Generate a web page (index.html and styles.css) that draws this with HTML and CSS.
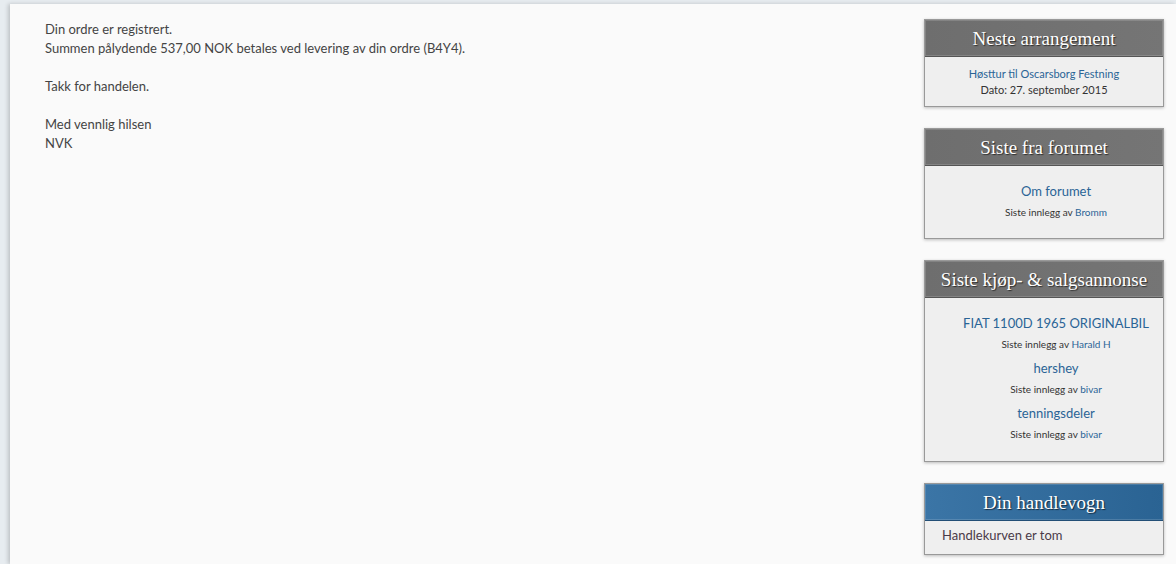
FILE: index.html
```html
<!DOCTYPE html>
<html lang="no">
<head>
<meta charset="utf-8">
<title>Ordre</title>
<link rel="stylesheet" href="styles.css">
</head>
<body>
<div class="wrap">
  <main class="content">
    <p>Din ordre er registrert.<br>Summen pålydende 537,00 NOK betales ved levering av din ordre (B4Y4).</p>
    <p>Takk for handelen.</p>
    <p>Med vennlig hilsen<br>NVK</p>
  </main>
  <aside class="sidebar">
    <section class="box">
      <h2 class="box-head">Neste arrangement</h2>
      <div class="box-body event">
        <a class="link" href="#">Høsttur til Oscarsborg Festning</a>
        <div class="date">Dato: 27. september 2015</div>
      </div>
    </section>
    <section class="box">
      <h2 class="box-head">Siste fra forumet</h2>
      <div class="box-body list">
        <div class="item">
          <a class="title" href="#">Om forumet</a>
          <div class="meta">Siste innlegg av <a href="#">Bromm</a></div>
        </div>
      </div>
    </section>
    <section class="box">
      <h2 class="box-head">Siste kjøp- &amp; salgsannonse</h2>
      <div class="box-body list list-long">
        <div class="item">
          <a class="title" href="#">FIAT 1100D 1965 ORIGINALBIL</a>
          <div class="meta">Siste innlegg av <a href="#">Harald H</a></div>
        </div>
        <div class="item">
          <a class="title" href="#">hershey</a>
          <div class="meta">Siste innlegg av <a href="#">bivar</a></div>
        </div>
        <div class="item">
          <a class="title" href="#">tenningsdeler</a>
          <div class="meta">Siste innlegg av <a href="#">bivar</a></div>
        </div>
      </div>
    </section>
    <section class="box">
      <h2 class="box-head blue">Din handlevogn</h2>
      <div class="box-body cart">Handlekurven er tom</div>
    </section>
  </aside>
</div>
</body>
</html>
```
FILE: styles.css
```css
html, body {
  margin: 0;
  padding: 0;
  background: #e7ecf0;
  height: 100%;
  overflow: hidden;
}
body {
  font-family: "Lato", "Open Sans", sans-serif;
  color: #444;
}
.wrap {
  display: flex;
  margin: 4px 0 0 10px;
  background: #fafafa;
  height: calc(100vh - 4px);
  box-sizing: border-box;
  box-shadow: -2px 0 4px rgba(0,0,0,0.18);
}
.content {
  flex: 1;
  padding: 16px 0 0 35px;
  font-size: 13px;
  line-height: 19px;
  color: #444;
}
.content p {
  margin: 0 0 19px;
}
.sidebar {
  width: 240px;
  margin-right: 12px;
  padding-top: 15px;
  display: flex;
  flex-direction: column;
  gap: 21px;
}
.box {
  background: #efefef;
  border: 1px solid #999;
  box-shadow: 0 1px 3px rgba(0,0,0,0.25);
}
.box-head {
  margin: 0;
  height: 36px;
  line-height: 37px;
  text-align: center;
  font-family: "Liberation Serif", "DejaVu Serif", serif;
  font-weight: normal;
  font-size: 19px;
  color: #fff;
  text-shadow: 1px 1px 1px rgba(0,0,0,0.6);
  background: linear-gradient(to right, #6e6e6e, #757575);
  border-bottom: 1px solid #555;
  box-shadow: inset 0 0 0 1px rgba(255,255,255,0.15);
}
.box-head.blue {
  background: linear-gradient(to right, #3b75a6, #2a6393);
  border-bottom-color: #234f76;
}
.box-body {
  font-size: 11px;
  text-align: center;
}
a {
  color: #2a6496;
  text-decoration: none;
}
.event {
  padding: 9px 0 8px;
  line-height: 16px;
}
.event .date {
  color: #333;
}
.list {
  padding: 16px 0 19px 24px;
}
.list-long {
  padding-bottom: 20px;
}
.item + .item {
  margin-top: 8px;
}
.item .title {
  display: block;
  font-size: 13px;
  line-height: 18px;
}
.item .meta {
  margin-top: 5px;
  font-size: 10px;
  line-height: 14px;
  color: #333;
}
.cart {
  text-align: left;
  padding: 6px 17px 10px;
  font-size: 13px;
  line-height: 17px;
  color: #4a3a48;
}
```
